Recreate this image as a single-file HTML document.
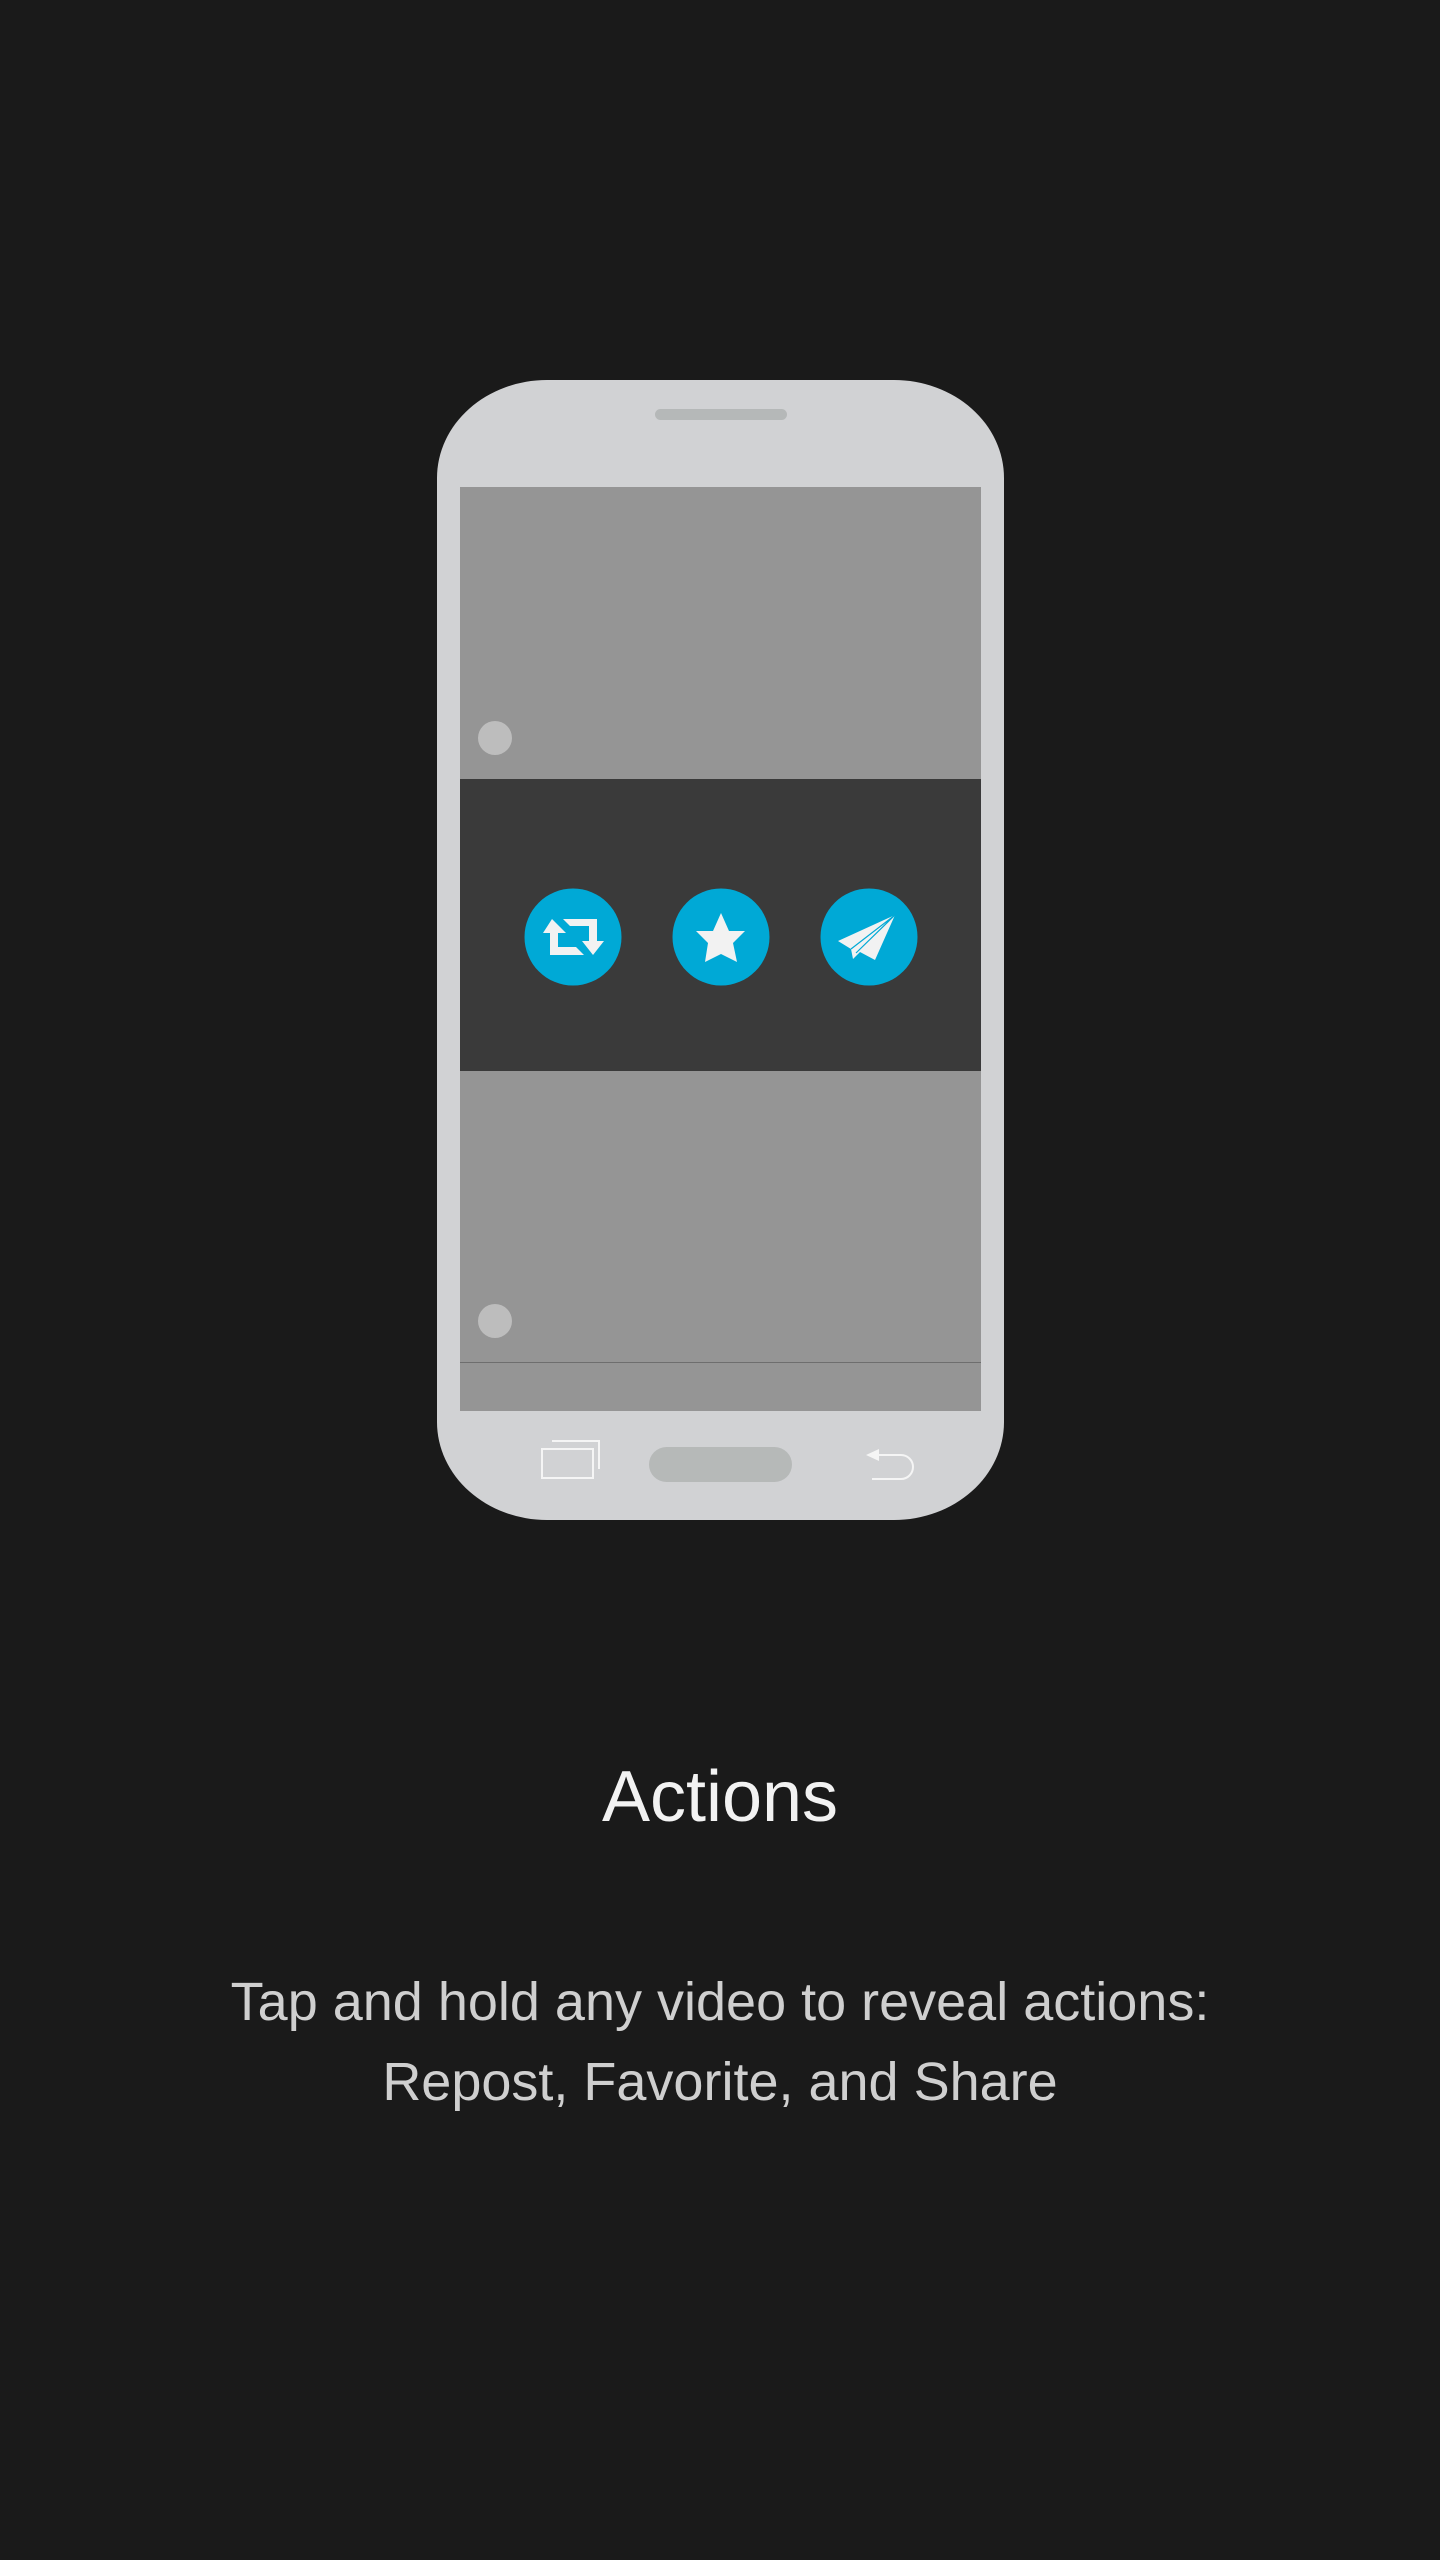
<!DOCTYPE html>
<html><head><style>
body{margin:0;width:1440px;height:2560px;background:#1a1a1a;position:relative;overflow:hidden;font-family:"Liberation Sans",sans-serif}
.a{position:absolute}
</style></head><body>
<div class="a" style="left:437px;top:380px;width:567px;height:1140px;background:#d1d2d4;border-radius:110px 110px 110px 110px/98px 98px 98px 98px"></div>
<div class="a" style="left:655px;top:409px;width:132px;height:11px;background:#b5b8b8;border-radius:6px"></div>
<div class="a" style="left:460px;top:487px;width:521px;height:924px;background:#959595"></div>
<div class="a" style="left:460px;top:779px;width:521px;height:292px;background:#3a3a3a"></div>
<div class="a" style="left:460px;top:1362px;width:521px;height:1px;background:#6e6e6e"></div>
<div class="a" style="left:478px;top:721px;width:34px;height:34px;border-radius:50%;background:#bdbdbd"></div>
<div class="a" style="left:478px;top:1304px;width:34px;height:34px;border-radius:50%;background:#bdbdbd"></div>
<svg class="a" style="left:0;top:0" width="1440" height="1600">
<circle cx="573" cy="937" r="48.5" fill="#00a9d6"/>
<circle cx="721" cy="937" r="48.5" fill="#00a9d6"/>
<circle cx="869" cy="937" r="48.5" fill="#00a9d6"/>
<g fill="#f2f2f2">
<path d="M543 933 L552 919 L566 933 L558 933 L558 947 L576 947 L584 955 L550 955 L550 933Z"/>
<path d="M563 919 L597 919 L597 941 L604 941 L593 955 L582 941 L589 941 L589 926 L570 926Z"/>
<path d="M721 913 L729 931 L745 931 L733 943 L737 962 L721 954 L705 962 L708 943 L696 931 L713 931Z"/>
<path d="M895 915 L875 960 L860 952 L853 959 L851 949 L838 941Z"/>
</g>
<path d="M895 915 L851 949 M895 915 L856 953" stroke="#00a9d6" stroke-width="1.2" fill="none"/>
<rect x="649" y="1447" width="143" height="35" rx="17.5" fill="#b6b9b8"/>
<g stroke="#f5f5f5" stroke-width="2" fill="none">
<rect x="542" y="1449" width="51" height="29"/>
<path d="M552 1441 L599 1441 L599 1469"/>
<path d="M872 1455 L901 1455 A12 12 0 0 1 901 1479 L872 1479"/>
</g>
<path d="M866 1455 L879 1449 L879 1461Z" fill="#f5f5f5"/>
</svg>
<div class="a" style="left:0;width:1440px;top:1752px;text-align:center;color:#f2f2f2;font-size:72px;line-height:90px">Actions</div>
<div class="a" style="left:0;width:1440px;top:1962px;text-align:center;color:#cfcfcf;font-size:54px;line-height:80px">Tap and hold any video to reveal actions:<br>Repost, Favorite, and Share</div>
</body></html>
